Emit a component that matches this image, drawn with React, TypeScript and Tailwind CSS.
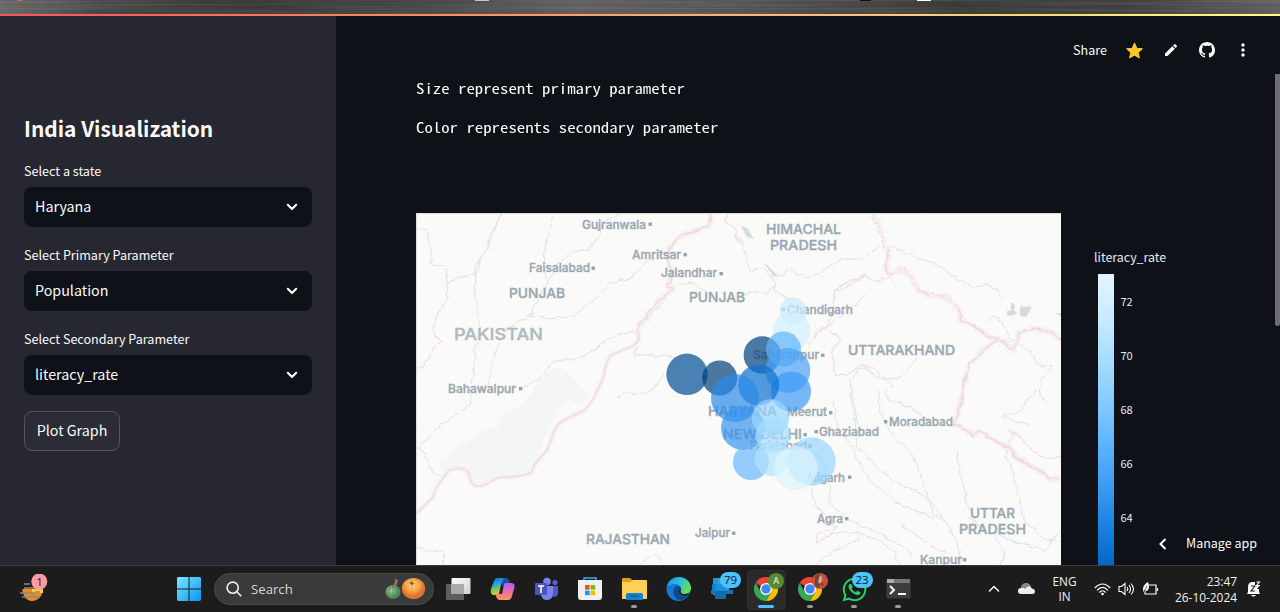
import React from "react";
import { MdEdit, MdMoreVert } from "react-icons/md";
import { FaWhatsapp } from "react-icons/fa";

const SANS = "font-['Noto_Sans_CJK_SC','Noto_Sans',sans-serif]";
const SEGOE = "font-['Open_Sans','Noto_Sans',sans-serif]";

function Chevron() {
  return (
    <svg width="12" height="8" viewBox="0 0 12 8" fill="none" stroke="#fafafa" strokeWidth="2.1" strokeLinecap="round" strokeLinejoin="round">
      <path d="M1.8 1.8 6 6l4.2-4.2" />
    </svg>
  );
}

function Select({ label, value }: { label: string; value: string }) {
  return (
    <div className="mb-4 flex h-[68px] flex-col">
      <div className="flex h-7 items-start text-[12.6px] leading-[23px] text-[#fafafa]">{label}</div>
      <div className="flex h-10 shrink-0 items-center justify-between rounded-lg bg-[#0e1117] pr-[14.5px] pl-[11px] text-[14.3px] text-[#fafafa]">
        <span className="pb-[2px]">{value}</span>
        <Chevron />
      </div>
    </div>
  );
}

function Sidebar() {
  return (
    <aside className="flex w-[336px] shrink-0 flex-col bg-[#262730] px-6 pt-[96px]">
      <h2 className="mb-[18px] flex h-[33px] items-center text-[20.9px] font-bold text-[#fafafa]">India Visualization</h2>
      <div className="-mt-[4px]">
        <Select label="Select a state" value="Haryana" />
        <Select label="Select Primary Parameter" value="Population" />
        <Select label="Select Secondary Parameter" value="literacy_rate" />
      </div>
      <button className="flex h-10 w-24 items-center justify-center rounded-lg border border-[#52535b] bg-[#2b2c36] pb-[2px] text-[14.3px] whitespace-nowrap text-[#fafafa]">
        Plot Graph
      </button>
    </aside>
  );
}

function GithubMark() {
  return (
    <svg width="16" height="16" viewBox="0 0 16 16" fill="currentColor" className="mr-[18px]">
      <path d="M8 0C3.58 0 0 3.58 0 8c0 3.54 2.29 6.53 5.47 7.59.4.07.55-.17.55-.38 0-.19-.01-.82-.01-1.49-2.01.37-2.53-.49-2.69-.94-.09-.23-.48-.94-.82-1.13-.28-.15-.68-.52-.01-.53.63-.01 1.08.58 1.23.82.72 1.21 1.87.87 2.33.66.07-.52.28-.87.51-1.07-1.78-.2-3.64-.89-3.64-3.95 0-.87.31-1.59.82-2.15-.08-.2-.36-1.02.08-2.12 0 0 .67-.21 2.2.82.64-.18 1.32-.27 2-.27s1.36.09 2 .27c1.53-1.04 2.2-.82 2.2-.82.44 1.1.16 1.92.08 2.12.51.56.82 1.27.82 2.15 0 3.07-1.87 3.75-3.65 3.95.29.25.54.73.54 1.48 0 1.07-.01 1.93-.01 2.2 0 .21.15.46.55.38A8.01 8.01 0 0 0 16 8c0-4.42-3.58-8-8-8Z" />
    </svg>
  );
}

function Toolbar() {
  return (
    <div className="flex h-6 items-center pl-[737px] text-[#fafafa]">
      <span className="w-[53px] text-[12.6px]">Share</span>
      <svg width="17" height="17" viewBox="0.3 0 15.4 15.4" className="mr-[20px]">
        <path d="M8 1.2 10 5.7l5 .4-3.8 3.3 1.2 4.9L8 11.7l-4.4 2.6 1.2-4.9L1 6.1 6 5.7Z" fill="#ffca28" stroke="#ffca28" strokeWidth="1" strokeLinejoin="round" />
      </svg>
      <MdEdit size={16} className="mr-[20px]" />
      <GithubMark />
      <MdMoreVert size={20} />
    </div>
  );
}

type Label = { t: string; x: number; y: number; w: number; s: number; c?: string };
const LABELS: Label[] = [
  { t: "Gujranwala", x: 582, y: 229, w: 64, s: 11.5 },
  { t: "Amritsar", x: 632, y: 259, w: 49, s: 11.5 },
  { t: "Faisalabad", x: 529, y: 272, w: 61, s: 11.5 },
  { t: "Jalandhar", x: 661, y: 277, w: 56, s: 11.5 },
  { t: "Bahawalpur", x: 448, y: 393, w: 68, s: 11.5 },
  { t: "Chandigarh", x: 787, y: 313.5, w: 66, s: 11.5 },
  { t: "Saharanpur", x: 753, y: 359, w: 66, s: 11.5 },
  { t: "Meerut", x: 787, y: 416, w: 40, s: 11.5 },
  { t: "Ghaziabad", x: 819, y: 435.5, w: 60, s: 11.5 },
  { t: "Faridabad", x: 750, y: 450, w: 57, s: 11.5 },
  { t: "Moradabad", x: 889, y: 426, w: 64, s: 11.5 },
  { t: "Aligarh", x: 806, y: 481.5, w: 39, s: 11.5 },
  { t: "Agra", x: 817, y: 522.5, w: 26, s: 11.5 },
  { t: "Jaipur", x: 695, y: 537, w: 35, s: 11.5 },
  { t: "Kanpur", x: 920, y: 563.5, w: 42, s: 11.5 },
  { t: "PUNJAB", x: 509, y: 297.5, w: 56, s: 13.5 },
  { t: "PUNJAB", x: 689, y: 302, w: 56, s: 13.5 },
  { t: "HIMACHAL", x: 766, y: 234, w: 75, s: 13.5 },
  { t: "PRADESH", x: 770, y: 250, w: 67, s: 13.5 },
  { t: "UTTARAKHAND", x: 848, y: 355, w: 107, s: 13.5 },
  { t: "HARYANA", x: 708, y: 416, w: 69, s: 13.5 },
  { t: "NEW DELHI", x: 723, y: 438.5, w: 79, s: 13.5 },
  { t: "RAJASTHAN", x: 586, y: 544, w: 84, s: 13.5 },
  { t: "UTTAR", x: 970, y: 517.5, w: 45, s: 13.5 },
  { t: "PRADESH", x: 959, y: 533.5, w: 67, s: 13.5 },
  { t: "PAKISTAN", x: 454, y: 339.5, w: 89, s: 16.5, c: "#b0bac1" },
];

const DOTS: [number, number][] = [
  [650, 224], [685, 254.5], [593, 268], [721, 273.5], [520.5, 388.5], [783, 309], [822.5, 355],
  [830.5, 412.5], [816, 431.5], [805, 434.5], [810, 446], [885.5, 421.5], [849.5, 477], [846.5, 518.5],
  [733.5, 533], [964.5, 559.5],
];

const CIRCLES: [number, number, number, string][] = [
  [793, 311, 13.5, "#c7ebff"],
  [791.7, 331, 19, "#d0efff"],
  [687, 374.3, 20.7, "#004c94"],
  [719.7, 378, 17.5, "#003f7b"],
  [762.3, 355, 18.7, "#004280"],
  [783.5, 349, 17.5, "#60b4ff"],
  [787.8, 370.5, 22.5, "#4aa2f8"],
  [791, 391.5, 20, "#3d9bf5"],
  [758.7, 385, 20.5, "#0b70d2"],
  [735, 398, 24, "#2a8aea"],
  [743, 428, 22, "#3895f0"],
  [751, 462, 18, "#69b7ff"],
  [770.5, 418, 18.7, "#99d5ff"],
  [773, 435, 17.5, "#a6dcff"],
  [811.5, 461.5, 24.2, "#98d5ff"],
  [772, 459, 17.3, "#b4e2ff"],
  [795.5, 468, 22, "#dbf3ff"],
];

const RIVERS = [
  "M502 213 498 222 491 234 487 248 481 258 476 275 475 292 478 310 480 330 475 350 474 370 471 384",
  "M555 213 548 232 545 250 544 270 548 283",
  "M622 213 605 222 598 238 588 249 572 252 555 266 547 284 530 315 508 328 496 350 487 385",
  "M530 315 545 318 572 317 586 305 600 295 610 283 632 277 645 263 660 255",
  "M523 386 535 382 547 370 555 361 580 358 596 348 610 338 625 334 637 330 651 316 665 300",
  "M471 391 471 402 458 415 442 424 431 436 417 446 425 454 430 468 442 477",
  "M680 285 692 283 700 288 705 291",
  "M740 295 752 292 768 293 775 284 772 276 783 276 788 268 805 278 822 272 840 260 864 258 879 245",
  "M885 244 897 250 920 259 940 265 956 278 973 288 988 284 1002 296",
  "M869 292 858 302 845 312 833 323 818 329 810 345",
  "M917 359 907 370 901 377 885 379 880 373 868 366 858 369 850 382 854 405 858 425",
  "M878 390 880 405 884 420 892 434 911 452 919 470 927 492 933 515 946 522 956 540 962 563",
  "M850 392 855 420 857 446 870 460 892 480 918 492 930 502 946 522",
  "M833 402 838 428 850 443 860 464 872 482 897 503 917 511 935 519",
  "M957 449 960 475 965 490 967 505 976 523 993 535 1005 550 1000 565",
  "M1060 530 1045 550 1029 546 1010 540 990 533 968 518",
  "M1013 431 1006 455 1015 480 1019 500 1025 523 1047 540 1061 541",
  "M985 322 993 316 1004 325 1010 338 1018 342 1031 354 1039 365 1052 367 1041 380 1040 395 1048 405",
  "M1036 390 1025 403 1020 412 1003 415 1009 420 1024 423 1029 425",
  "M815 450 824 465 829 485 830 502 842 515 857 524 875 531 890 540 905 548 914 556",
  "M814 565 833 552 853 543 862 535 879 540 893 551 900 565",
  "M901 524 912 533 929 544 940 551 948 554",
  "M617 398 625 393 645 394 657 385 664 374",
  "M639 563 657 555 664 565",
];

const BORDERS = [
  "M417 230 426 228 431 250 431 263 446 268 447 284 465 275 475 275 476 266 487 247 502 213",
  "M446 284 447 301 434 320 434 335 440 340 427 359 422 367 417 370",
  "M637 332 637 345 635 355 667 355 678 362",
  "M740 238 751 272 763 267 774 280 774 290 791 301",
  "M864 275 840 286 835 292 835 312 825 327 812 340",
  "M827 329 841 339 832 354 836 375 847 376 862 364 873 375 884 379 893 387",
  "M895 285 890 276 875 281 864 276 847 286 836 291 834 302",
  "M885 390 888 401 900 402 918 413 933 425",
  "M811 486 815 505 826 515 835 528 816 534 818 542 835 532 861 534",
  "M1061 455 1050 458 1035 453 1021 439 1010 430",
  "M417 546 423 550 443 552 444 565",
  "M726 213 726 222 735 231 740 244",
];

function IndiaMap() {
  return (
    <svg width="645" height="352" viewBox="416 213 645 352" className="block shrink-0">
      <defs>
        <filter id="relief" x="0" y="0" width="100%" height="100%">
          <feTurbulence type="fractalNoise" baseFrequency="0.045" numOctaves="3" seed="4" />
          <feColorMatrix values="0 0 0 0 0.88  0 0 0 0 0.9  0 0 0 0 0.89  0 0 0 2.2 -1.18" />
        </filter>
        <filter id="jag" x="-5%" y="-5%" width="110%" height="110%" colorInterpolationFilters="sRGB">
          <feTurbulence type="fractalNoise" baseFrequency="0.13" numOctaves="2" seed="8" />
          <feDisplacementMap in="SourceGraphic" scale="6" xChannelSelector="R" yChannelSelector="G" />
          <feGaussianBlur stdDeviation="0.25" />
        </filter>
      </defs>
      <rect x="416" y="213" width="645" height="352" fill="#fafaf8" />
      <rect x="416" y="213" width="645" height="352" filter="url(#relief)" opacity="0.08" />
      <path d="M549 371 560 368 570 374 578 385 584 391 591 394 587 400 580 404 569 400 560 405 554 412 549 430 544 438 540 450 534 466 532 470 515 475 500 477 484 484 474 484 468 470 460 468 450 468 443 472 439 462 448 459 455 447 470 441 484 430 497 427 505 413 520 407 531 395 538 380Z" fill="#f4f6f4" />
      <g fill="none" strokeLinejoin="round" filter="url(#jag)">
        <g stroke="#dde2e6" strokeWidth="1">{RIVERS.map((d, i) => <path key={i} d={d} />)}</g>
        <g stroke="#f0dbde" strokeWidth="1.1">{BORDERS.map((d, i) => <path key={i} d={d} />)}</g>
        <g stroke="#f8f0f0" strokeWidth="6">
          <path d="M710 213 710 224 696 231 682 235 670 247 668 262 672 273 668 285 674 288 660 300 648 315 637 328" />
          <path d="M872 213 884 239 888 257 886 272 893 275 902 268 911 277 918 290 930 296 945 297 959 309 961 320 978 329 992 337 1006 342 1014 350 1020 332 1035 329 1051 332 1061 341" />
          <path d="M995 340 984 350 970 363 964 382 962 400 957 415 954 423 974 435 979 431 990 438 1010 448 1018 459 1038 470 1050 478 1061 479" />
        </g>
        <g stroke="#efd8db" strokeWidth="1.6">
          <path d="M710 213 710 224 696 231 682 235 670 247 668 262 672 273 668 285 674 288 660 300 648 315 637 328" />
          <path d="M888 250 886 272 893 275" />
          <path d="M916 288 930 296M959 309 961 320 978 329 992 337 1006 342 1008 350 1014 350 1020 332 1035 329 1051 332 1061 341" />
          <path d="M995 340 984 350 970 363 964 382 962 400 957 415 954 423 974 435 979 431 990 438 1010 448 1018 459 1038 470 1050 478 1061 479" />
          <path strokeDasharray="2 3" d="M872 213 880 231 884 250M893 275 902 265 910 277 918 290M932 293 944 297 959 309M962 315 985 335 1000 345" />
        </g>
      </g>
      <g fill="none" strokeLinejoin="round">
        <path d="M637 328Q644 343 628 348L611 355Q604 366 604 376L594 398 585 410 564 420Q554 426 552 438L547 450 534 465 532 472Q520 478 500 477L482 486Q474 488 471 481L468 471 460 468 449 470 438 485 432 498 416 514" stroke="#f8f0f0" strokeWidth="5" />
        <path d="M637 328Q644 343 628 348L611 355Q604 366 604 376L594 398 585 410 564 420Q554 426 552 438L547 450 534 465 532 472Q520 478 500 477L482 486Q474 488 471 481L468 471 460 468 449 470 438 485 432 498 416 514" stroke="#edd8da" strokeWidth="1.2" />
      </g>
      <path d="M741 226 747 228 754 239 747 237ZM1011 303Q1013 302 1015 305L1014 310 1017 313Q1013 317 1007 315L1007 311 1011 311ZM1020 306 1024 307 1031 306 1031 309 1026 317 1020 316ZM1055 313 1061 313 1061 316ZM764 264 767 265 777 275 774 276Z" fill="#d5dbe0" />
      <g fill="#95a3ad">{DOTS.map(([x, y], i) => <rect key={i} x={x - 1.5} y={y - 1.5} width="3.4" height="3.4" />)}</g>
      <g fontFamily="Inter, 'Open Sans', sans-serif" fontWeight="500">
        {LABELS.map((l, i) => (
          <text key={i} x={l.x} y={l.y} fontSize={l.s} textLength={l.w} lengthAdjust="spacingAndGlyphs" fill={l.c ?? "#9ba8b1"} stroke={l.c ?? "#9ba8b1"} strokeWidth="0.35">{l.t}</text>
        ))}
      </g>
      {CIRCLES.map(([x, y, r, c], i) => <circle key={i} cx={x} cy={y} r={r} fill={c} opacity="0.7" />)}
      <path d="M416.5 565V213.5H1061" fill="none" stroke="#d0d0d0" strokeWidth="0.7" />
    </svg>
  );
}

function Legend() {
  return (
    <div className="flex w-[150px] flex-col pt-[33px] pl-[33px] text-[#e6eaf1]">
      <div className="flex h-[22px] items-center text-[12.4px]">literacy_rate</div>
      <div className="mt-[6px] ml-1 flex">
        <div className="h-[291px] w-4 bg-linear-[180deg,#e4f5ff_0%,#c7ebff_15%,#a6dcff_30%,#83c9ff_45%,#60b4ff_58%,#3d9df3_72%,#1c83e1_86%,#0068c9_100%]" />
        <div className="flex flex-col pl-[6.5px] text-[11px]">
          {["72", "70", "68", "66", "64"].map((n) => (
            <span key={n} className="flex h-[54px] items-center">{n}</span>
          ))}
        </div>
      </div>
    </div>
  );
}

function Cell({ children, active, open }: { children?: React.ReactNode; active?: boolean; open?: boolean }) {
  return (
    <div className="relative flex h-full w-11 shrink-0 items-center justify-center">
      {active && <div className="absolute top-[4px] left-[3px] h-[40px] w-[39px] rounded border border-[#303030] bg-[#2a2a2a]" />}
      <div className="relative flex">{children}</div>
      {open && <div className="absolute bottom-[4px] left-[19px] h-[3px] w-[6px] rounded-full bg-[#9a9a9a]" />}
      {active && <div className="absolute bottom-[4px] left-[14px] h-[3px] w-4 rounded-full bg-[#4cc2ff]" />}
    </div>
  );
}

function Badge({ children }: { children: string }) {
  return <span className="absolute -top-[5px] left-[10px] flex h-4 w-[21px] items-center justify-center rounded-full bg-[#4cc2ff] text-[11.5px] text-[#10212c]">{children}</span>;
}

function Chrome() {
  return (
    <svg width="24" height="24" viewBox="0 0 24 24">
      <path d="M12 12 1.6 6A12 12 0 0 1 22.4 6Z" fill="#ea4335" />
      <path d="M12 6H22.4A12 12 0 0 1 12 24L17.2 15Z" fill="#fbbc05" />
      <path d="M6.8 15 1.6 6A12 12 0 0 0 12 24L17.2 15Z" fill="#34a853" />
      <circle cx="12" cy="12" r="6" fill="#fff" />
      <circle cx="12" cy="12" r="4.7" fill="#4285f4" />
    </svg>
  );
}

function Pumpkins() {
  return (
    <svg width="42" height="24" viewBox="0 0 42 24">
      <defs>
        <radialGradient id="pg" cx="0.4" cy="0.4"><stop offset="0" stopColor="#a4c893" /><stop offset="1" stopColor="#4c8757" /></radialGradient>
        <radialGradient id="po" cx="0.45" cy="0.35"><stop offset="0" stopColor="#ffd08a" /><stop offset="0.6" stopColor="#f4a544" /><stop offset="1" stopColor="#dc7230" /></radialGradient>
      </defs>
      <ellipse cx="9" cy="15" rx="7.5" ry="7" fill="url(#pg)" />
      <path d="M7 9Q3 15 6 21M9 9V22M12 9Q15 15 12 21" fill="none" stroke="#4a8355" strokeWidth="0.5" />
      <path d="M8 10Q11 7 11 2L14 3Q13 8 11 11Z" fill="#94716a" />
      <ellipse cx="29.5" cy="11.5" rx="11.7" ry="10.5" fill="url(#po)" />
      <path d="M27 7Q18 12 24 20M28 8Q27 16 30 21M29 7Q39 12 35 20" fill="none" stroke="#e29238" strokeWidth="0.5" />
      <path d="M25 6 27 5 28 4 29 6 31 6 29 7 28 9 27 7Z" fill="#8b5c25" />
    </svg>
  );
}

function Taskbar() {
  return (
    <footer className={`flex h-[47px] shrink-0 items-center border-t border-[#3b3b3d] bg-[#1c1c1c] text-[#f3f3f3] ${SEGOE}`}>
      <div className="w-[167px] shrink-0 pl-[20px]">
        <svg width="28" height="30" viewBox="20 573 28 30">
          <path d="M22 587H43C43 595 38 600 32 600 27 600 23 596 22 587Z" fill="#e88b20" />
          <path d="M32 588H43V592H32Z" fill="#ffc83d" />
          <path d="M20 583H35V588H20Z" fill="#1c1c1c" />
          <path d="M24 583H30M24 587H35M20 592H35M35 591H40M22 596H39" stroke="#8b8b8b" strokeWidth="1.7" />
          <circle cx="39.3" cy="580.5" r="8" fill="#ff99a4" />
          <text x="36.3" y="584.5" fontSize="11.5" fontFamily="Open Sans" fill="#221a1b">1</text>
        </svg>
      </div>
      <Cell>
        <svg width="24" height="24" viewBox="0 0 24 24">
          <defs><linearGradient id="wl" x2="24" y2="24" gradientUnits="userSpaceOnUse"><stop stopColor="#7be7ff" /><stop offset="1" stopColor="#0a92f5" /></linearGradient></defs>
          <path d="M1 0H11.5V11.5H0V1ZM12.5 0H23L24 1V11.5H12.5ZM0 12.5H11.5V24H1L0 23ZM12.5 12.5H24V23L23 24H12.5Z" fill="url(#wl)" />
        </svg>
      </Cell>
      <div className="ml-[3px] flex h-8 w-[220px] shrink-0 items-center rounded-full border border-[#4a4a4a] bg-[#3a3a3a] pr-[7px] pl-[11px]">
        <svg width="16" height="16" viewBox="0 0 16 16" fill="none" stroke="#f0f0f0" strokeWidth="1.6" strokeLinecap="round"><circle cx="6.7" cy="6.7" r="5.6" /><path d="M10.8 10.8 14.8 14.8" /></svg>
        <span className="mt-px ml-[9px] flex-1 text-[13.2px] text-[#d6d6d6]">Search</span>
        <Pumpkins />
      </div>
      <div className="ml-[2px] flex h-full">
        <Cell>
          <svg width="26" height="24" viewBox="0 0 26 24"><defs><linearGradient id="tv" x2="1" y2="1"><stop stopColor="#fff" /><stop offset="1" stopColor="#cfcfcf" /></linearGradient></defs><rect x="1" y="7" width="18" height="16" rx="1" fill="#5e5e5e" /><rect x="6.5" y="1" width="19" height="16" rx="1" fill="url(#tv)" /><path d="M6.5 7H19V17H6.5Z" fill="#aaa" /></svg>
        </Cell>
        <Cell>
          <svg width="25" height="24" viewBox="0 0 25 24">
            <defs>
              <linearGradient id="ca" x2="0.3" y2="1"><stop stopColor="#1668d8" /><stop offset="0.4" stopColor="#20a8db" /><stop offset="0.7" stopColor="#7fc75c" /><stop offset="1" stopColor="#f5c91e" /></linearGradient>
              <linearGradient id="cb" x2="0" y2="1"><stop stopColor="#b55bf2" /><stop offset="0.5" stopColor="#ee6aab" /><stop offset="1" stopColor="#fb9d4a" /></linearGradient>
            </defs>
            <path d="M7 1H15Q18 1 19 5L20 7H17Q14 7 13 11L11 18H4Q0 18 1 12L4 4Q5 1 7 1Z" fill="url(#ca)" />
            <path d="M18 23H10Q7 23 6 19L5 17H9Q11 17 12 13L14 6H21Q26 6 24 12L22 19Q21 23 18 23Z" fill="url(#cb)" />
            <path d="M11 7H14L12 17H9Z" fill="#252129" />
            <path d="M14 1Q18 1 19 6H16Q14 6 13 9L11 7Z" fill="#174eb6" />
          </svg>
        </Cell>
        <Cell>
          <svg width="25" height="24" viewBox="0 0 25 24"><circle cx="13" cy="4.5" r="3.8" fill="#7b83eb" /><circle cx="21" cy="5.5" r="2.6" fill="#5b62c5" /><path d="M15 9H24V16Q24 20 19 20Z" fill="#5059c9" /><path d="M7 9H19V16Q19 23 13 23 8 23 7 18Z" fill="#7b83eb" /><rect x="1" y="6" width="12" height="12" rx="1" fill="#4b53bc" /><path d="M4 9H10M7 9V16" stroke="#fff" strokeWidth="1.6" /></svg>
        </Cell>
        <Cell>
          <svg width="24" height="24" viewBox="0 0 24 24"><path d="M6 5V1H18V5" fill="none" stroke="#38aee8" strokeWidth="1.5" /><path d="M0 3H24V20Q24 23 21 23H3Q0 23 0 20Z" fill="#f0f0f0" /><path d="M7 8H11.6V12.6H7Z" fill="#f25022" /><path d="M12.6 8H17.2V12.6H12.6Z" fill="#7fba00" /><path d="M7 13.6H11.6V18.2H7Z" fill="#00a4ef" /><path d="M12.6 13.6H17.2V18.2H12.6Z" fill="#ffb900" /></svg>
        </Cell>
        <Cell open>
          <svg width="25" height="24" viewBox="0 0 25 24"><path d="M0 2Q0 1 1 1H8L11 4V8H0Z" fill="#e39d13" /><path d="M0 5H8L11 3H24Q25 3 25 4V22H0Z" fill="#ffd056" /><path d="M4 23V18Q4 16 6 16H19Q21 16 21 18V23Z" fill="#1682cf" /><path d="M8 19H17" stroke="#0a579f" strokeWidth="1.3" /></svg>
        </Cell>
        <Cell>
          <svg width="25" height="24" viewBox="0 0 25 24"><defs><linearGradient id="eg" x2="1" y2="0.5"><stop stopColor="#2386dd" /><stop offset="0.5" stopColor="#29bddc" /><stop offset="1" stopColor="#69dd58" /></linearGradient></defs>
            <circle cx="12.5" cy="12" r="12" fill="#1478d4" /><path d="M1 9C3 3 8 0 13 0 20 0 25 5 25 11 25 15 22 17 18 17 15 17 14 15 15 13 16 9 12 7 9 7 5 7 2 9 1 9Z" fill="url(#eg)" /><path d="M9 10C5 15 9 24 16 23 19 23 22 20 23 18 18 21 13 18 13 14 13 12 14 11 15 12 15 9 11 8 9 10Z" fill="#11498d" /><path d="M13 14C13 12 14 11 15 12 14 15 15 17 18 17 20 17 23 16 23.5 17 19 21 13 18 13 14Z" fill="#1c1c1c" /></svg>
        </Cell>
        <Cell>
          <svg width="24" height="24" viewBox="0 0 24 24"><path d="M3 1H14V18H3Z" fill="#1f97dd" /><path d="M8 2H19V14H8Z" fill="#2ba4e3" /><path d="M1 13H6V17H1ZM16 13H23V17H16Z" fill="#1475b8" /><path d="M2 7H8V17H2Z" fill="#1578be" /><path d="M5 7H16V22H5Z" fill="#1b8fd5" /><path d="M5 14H16V22H5Z" fill="#0b6cae" /></svg>
          <Badge>79</Badge>
        </Cell>
        <Cell active><Chrome /><span className="absolute -top-[4px] left-[14px] flex h-4 w-4 items-center justify-center rounded-full bg-[#558b2f] text-[9px] text-white">A</span></Cell>
        <Cell open><Chrome /><svg width="16" height="16" viewBox="0 0 16 16" className="absolute -top-[4px] left-[14px]"><circle cx="8" cy="8" r="8" fill="#c0503f" /><path d="M3 3Q9-2 10 4L9 7 12 13 8 12 6 15 3 12Z" fill="#7a3f32" /><path d="M8 2Q11 3 10 8L8 11 6 9 7 5Z" fill="#d5a38c" /></svg></Cell>
        <Cell open><FaWhatsapp size={27} color="#25d366" className="-m-[1px]" /><Badge>23</Badge></Cell>
        <Cell open>
          <svg width="25" height="20" viewBox="0 0 25 20"><rect x="0.5" y="0.5" width="24" height="19" rx="1" fill="#3c3c3c" /><path d="M1 0H24V4H1Z" fill="#777" /><path d="M1 0H8V4H1Z" fill="#aaa" /><path d="M4 7 8 11 4 15M12 15H20" fill="none" stroke="#fff" strokeWidth="2" /></svg>
        </Cell>
      </div>
      <div className="ml-auto flex h-full shrink-0 items-center pr-[18px]">
        <svg width="12" height="8" viewBox="0 0 12 8" className="mr-[18px]" fill="none" stroke="#fff" strokeWidth="1.4"><path d="M1 6.5 6 1.5 11 6.5" /></svg>
        <svg width="17" height="12" viewBox="0 0 17 12" className="mr-[17px]"><path d="M3 5A5 4.5 0 0 1 13 4L10 8H2Z" fill="#888" /><path d="M3 11A3 3 0 0 1 3 5Q5 4 7 6 11 1 14 5.5 17 6 17 8.5 17 11 14 11Z" fill="#eee" /></svg>
        <div className="mr-[17px] w-[25px] text-center text-[11.8px] leading-[15.5px]">ENG<br />IN</div>
        <svg width="17" height="13" viewBox="0 0 17 13" className="mr-[7px]" fill="none" stroke="#fff" strokeWidth="1.2"><path d="M.8 5Q8.5-3 16.2 5M3 7.3Q8.5 1.5 14 7.3M5.3 9.5Q8.5 6 11.7 9.5" /><circle cx="8.5" cy="11" r="1.3" fill="#fff" stroke="none" /></svg>
        <svg width="17" height="14" viewBox="0 0 17 14" className="mr-[7px]" fill="none" stroke="#fff" strokeWidth="1.1"><path d="M1 4.5H3.5L7 1.5V12.5L3.5 9.5H1ZM9 5Q10.5 7 9 9M11 3Q14 7 11 11M13 1.5Q18 7 13 12.5" /></svg>
        <svg width="17" height="14" viewBox="0 0 17 14" className="mr-[15px]" fill="none" stroke="#fff" strokeWidth="1.2"><path d="M7 3H14V12H3V9M15.5 6V9" /><path d="M1 7Q1 3 6 0 8 5 6 8 4 10 2 8L1 11" fill="#fff" stroke="none" /><path d="M1 12 5 4" stroke="#1c1c1c" strokeWidth="0.7" /></svg>
        <div className="mr-[9px] w-[63px] text-right text-[11.9px] leading-[16px] whitespace-nowrap"><div>23:47</div><div>26-10-2024</div></div>
        <svg width="16" height="16" viewBox="0 0 16 16" fill="#fff"><path d="M2 11V6Q2 1 7 1H9V4H14L11 8H13V11L14 13H1ZM5 14H10Q7.5 17 5 14Z" /><path d="M5 5H9L5 10H9" fill="none" stroke="#1c1c1c" strokeWidth="1.1" /><path d="M10.5 1H13.5L10.5 4.5H14" fill="none" stroke="#fff" strokeWidth="1.1" /></svg>
      </div>
    </footer>
  );
}

export default function App() {
  return (
    <div className={`flex h-[612px] w-[1280px] flex-col overflow-hidden bg-[#0e1117] ${SANS}`}>
      <div className="flex h-[14px] shrink-0 bg-linear-[90deg,#686868_0%,#464646_8%,#383838_20%,#4a4a4a_35%,#606060_45%,#505050_60%,#3a3a3a_75%,#404040_88%,#606060_100%]">
        <svg width="1280" height="14" viewBox="0 0 1280 14">
          <defs><filter id="brush" x="0" y="0" width="100%" height="100%"><feTurbulence type="fractalNoise" baseFrequency="0.006 0.5" numOctaves="2" seed="3" /><feColorMatrix values="0 0 0 0 0.6 0 0 0 0 0.6 0 0 0 0 0.6 0 0 0 1.5 -0.6" /></filter></defs>
          <rect width="1280" height="14" filter="url(#brush)" opacity="0.2" />
          <path d="M475 0H489" stroke="#c9b9ee" strokeWidth="2" /><path d="M860 0H871" stroke="#111" strokeWidth="2" /><path d="M917 0H931" stroke="#fff" strokeWidth="2" /><path d="M17 0H22" stroke="#e46050" strokeWidth="2" />
        </svg>
      </div>
      <div className="h-[2px] shrink-0 bg-linear-[90deg,#f3545a_0%,#fa8d67_35%,#fbc078_65%,#fffd80_100%]" />
      <div className="flex h-[549px] shrink-0">
        <Sidebar />
        <main className="flex min-w-0 flex-1 justify-between">
          <div className="relative w-[939px] shrink-0 pt-[22px]">
            <Toolbar />
            <div className="flex flex-col items-start pt-[14px] pl-[80px] font-['Noto_Sans_Mono_CJK_SC','Liberation_Mono',monospace] text-[14px] whitespace-nowrap text-[#fafafa]">
              <div className="h-[39px] origin-left scale-x-[1.2] leading-[24px]">Size represent primary parameter</div>
              <div className="h-[39px] origin-left scale-x-[1.2] leading-[24px]">Color represents secondary parameter</div>
            </div>
            <div className="mt-[59px] flex h-[353px] overflow-hidden pl-[80px]">
              <IndiaMap />
              <Legend />
            </div>
            <div className="absolute right-0 bottom-0 flex h-[43px] w-[135px] items-center bg-[#0e1117] pl-[19px] text-[12.5px] whitespace-nowrap text-[#fafafa]">
              <svg width="8" height="12" viewBox="0 0 8 12" className="mr-[19px]" fill="none" stroke="#fff" strokeWidth="2"><path d="M6.5 1 1.5 6 6.5 11" /></svg>
              <span className="pb-px">Manage app</span>
            </div>
          </div>
          <div className="flex w-[5px] pt-[58px]"><div className="h-[252px] w-[5px] rounded-b bg-[#6c6e72]" /></div>
        </main>
      </div>
      <Taskbar />
    </div>
  );
}
